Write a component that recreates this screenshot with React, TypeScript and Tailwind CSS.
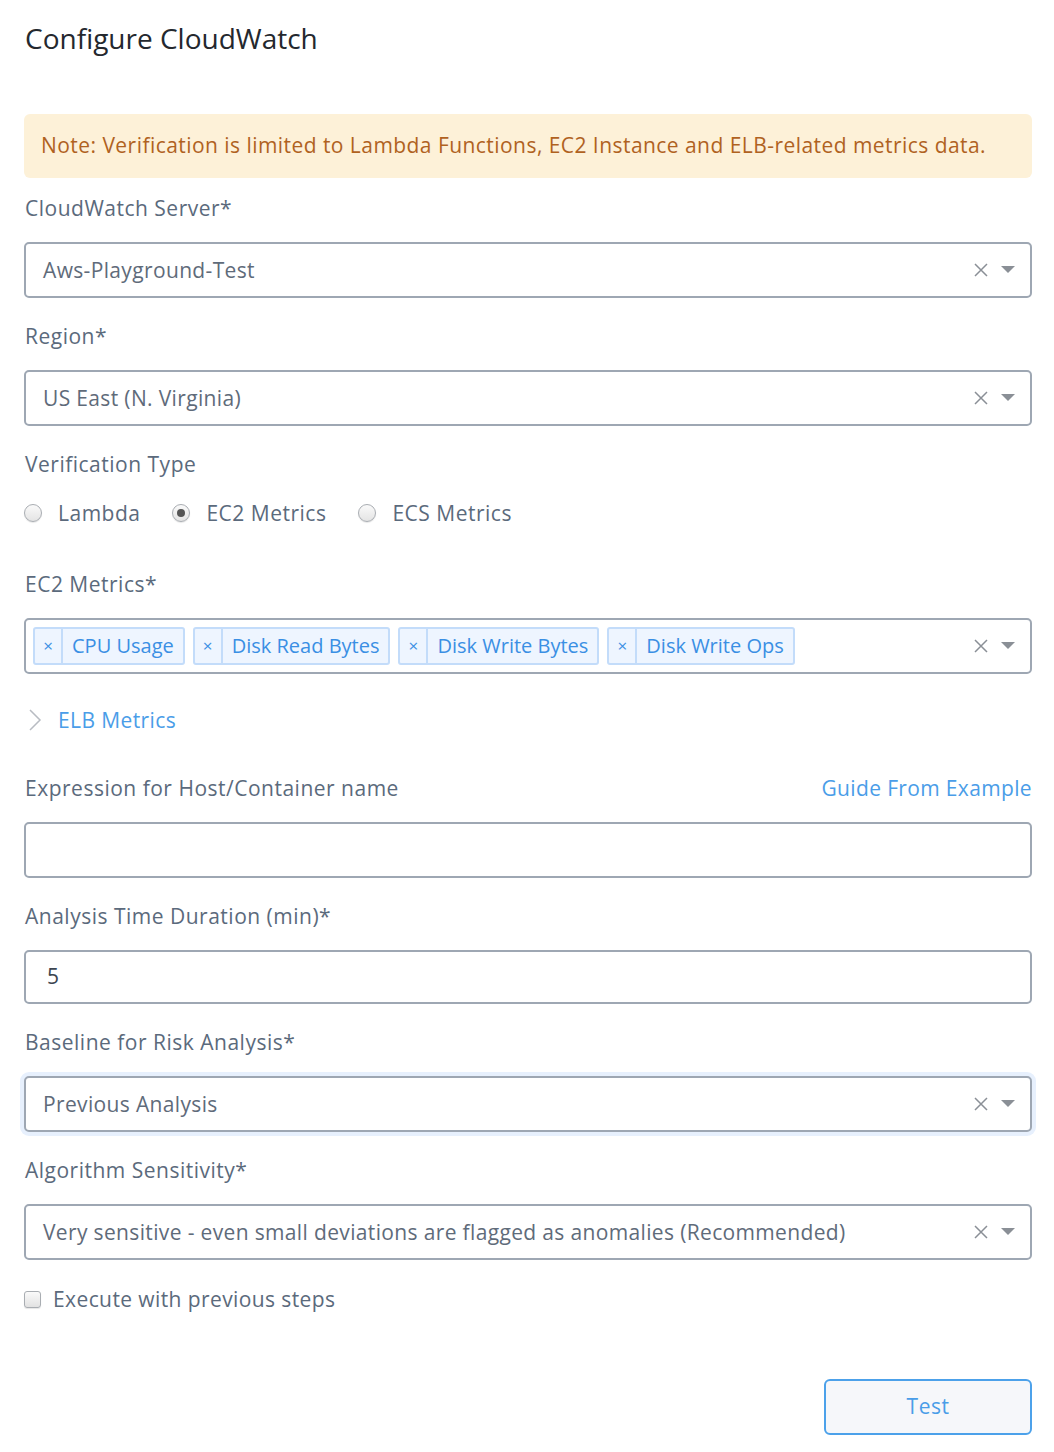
import React from "react";

const font = { fontFamily: "'Open Sans', 'Noto Sans', sans-serif" };

function Caret() {
  return (
    <svg width="16" height="10" viewBox="0 0 16 10" className="ml-3">
      <path d="M1 1 L15 1 L8 8 Z" fill="#8a8f96" />
    </svg>
  );
}

function Cross() {
  return (
    <svg width="14" height="14" viewBox="0 0 14 14">
      <path d="M1 1 L13 13 M13 1 L1 13" stroke="#8a8f96" strokeWidth="1.5" />
    </svg>
  );
}

function Label({ children }: { children: React.ReactNode }) {
  return (
    <div className="h-[28px] pl-[1px] text-[21px] leading-[28px] tracking-[0.5px] text-[#5b6a7c]">{children}</div>
  );
}

function Select({ value, focused }: { value: string; focused?: boolean }) {
  return (
    <div
      className={
        "flex h-[56px] items-center rounded-[5px] border-2 border-[#9ea7b3] bg-white pl-[17px] pr-[14px] " +
        (focused ? "ring-4 ring-[#e7f0fd]" : "")
      }
    >
      <div className="flex-1 text-[21px] leading-[28px] tracking-[0.35px] text-[#5f6b7a]">{value}</div>
      <Cross />
      <Caret />
    </div>
  );
}

function Tag({ label }: { label: string }) {
  return (
    <div className="flex h-[38px] items-stretch rounded-[3px] border-2 border-[#c3dcfa] bg-[#eef5ff] text-[#3a8fe4]">
      <div className="flex w-[28px] items-center justify-center border-r-2 border-[#c3dcfa] text-[17px]">×</div>
      <div className="flex items-center pl-[9px] pr-[9px] text-[20px]">{label}</div>
    </div>
  );
}

function Radio({ checked, label }: { checked?: boolean; label: string }) {
  return (
    <div className="flex items-center gap-[16px]">
      <div className="flex h-[18px] w-[18px] items-center justify-center rounded-full border border-[#a9adb2] bg-gradient-to-b from-[#fafafa] to-[#e4e4e4] shadow-[0_1px_1px_rgba(0,0,0,0.1)]">
        {checked && <div className="h-[8px] w-[8px] rounded-full bg-[#555]" />}
      </div>
      <span className="text-[21px] leading-[28px] tracking-[0.5px] text-[#5b6a7c]">{label}</span>
    </div>
  );
}

export default function App() {
  return (
    <div style={font} className="min-h-[1452px] bg-white pl-[24px] pr-[22px] pt-[18px]">
      <h1 className="h-[40px] pl-[1px] text-[28px] leading-[40px] text-[#24282e]">Configure CloudWatch</h1>

      <div className="mt-[56px] flex h-[64px] items-center rounded-[6px] bg-[#fdf1d8] px-[17px] text-[21px] tracking-[0.45px] text-[#b0621f]">
        Note: Verification is limited to Lambda Functions, EC2 Instance and ELB-related metrics data.
      </div>

      <div className="mt-[16px]">
        <Label>CloudWatch Server*</Label>
        <div className="mt-[20px]">
          <Select value="Aws-Playground-Test" />
        </div>
      </div>

      <div className="mt-[24px]">
        <Label>Region*</Label>
        <div className="mt-[20px]">
          <Select value="US East (N. Virginia)" />
        </div>
      </div>

      <div className="mt-[24px]">
        <Label>Verification Type</Label>
        <div className="mt-[21px] flex h-[28px] items-center gap-[32px]">
          <Radio label="Lambda" />
          <Radio checked label="EC2 Metrics" />
          <Radio label="ECS Metrics" />
        </div>
      </div>

      <div className="mt-[43px]">
        <Label>EC2 Metrics*</Label>
        <div className="mt-[20px] flex h-[56px] items-center rounded-[5px] border-2 border-[#9ea7b3] bg-white pl-[7px] pr-[14px]">
          <div className="flex flex-1 items-center gap-[8px]">
            <Tag label="CPU Usage" />
            <Tag label="Disk Read Bytes" />
            <Tag label="Disk Write Bytes" />
            <Tag label="Disk Write Ops" />
          </div>
          <Cross />
          <Caret />
        </div>
      </div>

      <div className="mt-[32px] flex h-[28px] items-center gap-[16px]">
        <svg width="14" height="22" viewBox="0 0 14 22" className="ml-[4px]">
          <path d="M2 1 L12 11 L2 21" stroke="#b8bcc2" strokeWidth="1.5" fill="none" />
        </svg>
        <span className="text-[21px] leading-[28px] tracking-[0.4px] text-[#4a9de8]">ELB Metrics</span>
      </div>

      <div className="mt-[40px]">
        <div className="flex h-[28px] items-center justify-between">
          <Label>Expression for Host/Container name</Label>
          <span className="text-[21px] leading-[28px] tracking-[0.35px] text-[#4a9de8]">Guide From Example</span>
        </div>
        <div className="mt-[20px] h-[56px] rounded-[5px] border-2 border-[#9ea7b3] bg-white" />
      </div>

      <div className="mt-[24px]">
        <Label>Analysis Time Duration (min)*</Label>
        <div className="mt-[20px] flex h-[54px] items-center rounded-[5px] border-2 border-[#9ea7b3] bg-white pl-[21px] text-[21px] text-[#3c4550]">
          5
        </div>
      </div>

      <div className="mt-[24px]">
        <Label>Baseline for Risk Analysis*</Label>
        <div className="mt-[20px]">
          <Select value="Previous Analysis" focused />
        </div>
      </div>

      <div className="mt-[24px]">
        <Label>Algorithm Sensitivity*</Label>
        <div className="mt-[20px]">
          <Select value="Very sensitive - even small deviations are flagged as anomalies (Recommended)" />
        </div>
      </div>

      <div className="mt-[25px] flex h-[28px] items-center gap-[12px]">
        <div className="h-[17px] w-[17px] rounded-[3px] border border-[#a9adb2] bg-gradient-to-b from-[#fafafa] to-[#e2e2e2] shadow-[0_1px_1px_rgba(0,0,0,0.1)]" />
        <span className="text-[21px] leading-[28px] tracking-[0.4px] text-[#5b6a7c]">Execute with previous steps</span>
      </div>

      <div className="mt-[66px] flex justify-end">
        <button className="h-[56px] w-[208px] rounded-[6px] border-2 border-[#4ca1ea] bg-[#f6f7fa] text-[21px] tracking-[0.5px] text-[#4a9de8]">
          Test
        </button>
      </div>
    </div>
  );
}
